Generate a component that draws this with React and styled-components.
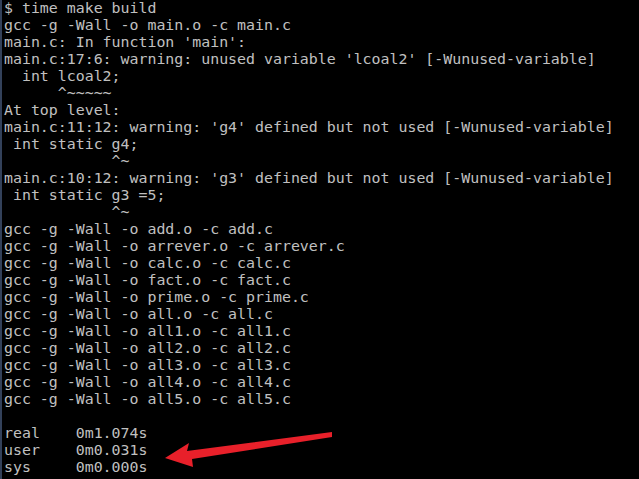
import React from "react";
import styled, { createGlobalStyle } from "styled-components";

const Global = createGlobalStyle`
  html, body { margin: 0; padding: 0; background: #000; }
  body { width: 639px; height: 479px; overflow: hidden; }
`;

const Terminal = styled.div`
  position: relative;
  width: 639px;
  height: 479px;
  background: #000;
  border-left: 2px solid #33415a;
  box-sizing: border-box;
  padding: 0 0 0 2px;
  overflow: hidden;
`;

const Output = styled.pre`
  margin: 0;
  font-family: "DejaVu Sans Mono", "Liberation Mono", monospace;
  font-size: 14.9px;
  line-height: 17px;
  color: #c0c0c0;
  white-space: pre;
`;

const Arrow = styled.svg`
  position: absolute;
  left: 0;
  top: 0;
  pointer-events: none;
`;

const lines = [
  "$ time make build",
  "gcc -g -Wall -o main.o -c main.c",
  "main.c: In function 'main':",
  "main.c:17:6: warning: unused variable 'lcoal2' [-Wunused-variable]",
  "  int lcoal2;",
  "      ^~~~~~",
  "At top level:",
  "main.c:11:12: warning: 'g4' defined but not used [-Wunused-variable]",
  " int static g4;",
  "            ^~",
  "main.c:10:12: warning: 'g3' defined but not used [-Wunused-variable]",
  " int static g3 =5;",
  "            ^~",
  "gcc -g -Wall -o add.o -c add.c",
  "gcc -g -Wall -o arrever.o -c arrever.c",
  "gcc -g -Wall -o calc.o -c calc.c",
  "gcc -g -Wall -o fact.o -c fact.c",
  "gcc -g -Wall -o prime.o -c prime.c",
  "gcc -g -Wall -o all.o -c all.c",
  "gcc -g -Wall -o all1.o -c all1.c",
  "gcc -g -Wall -o all2.o -c all2.c",
  "gcc -g -Wall -o all3.o -c all3.c",
  "gcc -g -Wall -o all4.o -c all4.c",
  "gcc -g -Wall -o all5.o -c all5.c",
  "",
  "real    0m1.074s",
  "user    0m0.031s",
  "sys     0m0.000s",
];

export default function App() {
  return (
    <>
      <Global />
      <Terminal>
        <Output>{lines.join("\n")}</Output>
        <Arrow width="639" height="479" viewBox="0 0 639 479">
          <polygon
            points="163,458 187,443 185,451 330,432 330,437 190,459 191,467"
            fill="#e8202a"
          />
        </Arrow>
      </Terminal>
    </>
  );
}
